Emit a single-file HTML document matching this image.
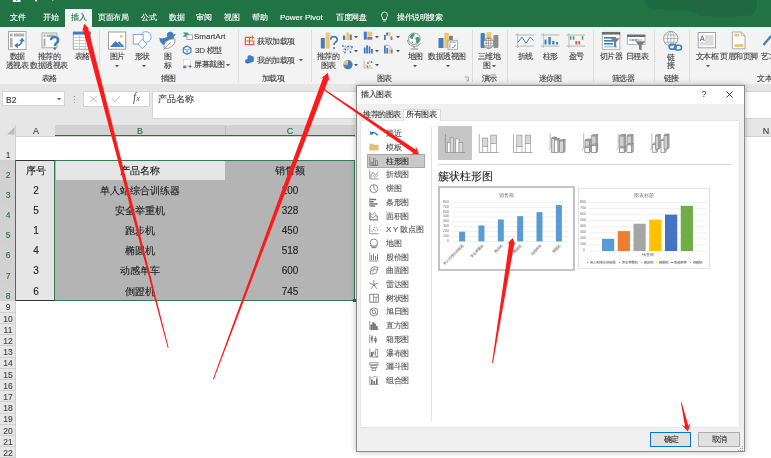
<!DOCTYPE html>
<html><head><meta charset="utf-8">
<style>
*{margin:0;padding:0;box-sizing:border-box}
html,body{width:771px;height:458px;overflow:hidden;background:#fff;font-family:"Liberation Sans",sans-serif;position:relative}
.a{position:absolute}
.t{position:absolute;white-space:nowrap;line-height:1;-webkit-text-stroke:.12px currentColor;will-change:transform}
svg{position:absolute;overflow:visible}
</style></head><body>
<div class="a" style="left:0px;top:0px;width:771px;height:27px;background:#217346;"></div>
<svg style="left:0;top:0" width="771" height="27"><path d="M645 0 H757 Q758 10 751 15.5 Q725 17.5 700 15.5 Q696 9.5 672 9.5 Q650 9.5 647 6Z" fill="#1d6140" opacity=".6"/></svg>
<div class="a" style="left:65px;top:9px;width:26.5px;height:18.5px;background:#f3f3f3;"></div>
<div class="t " style="top:14.00px;font-size:8px;color:#ffffff;letter-spacing:-0.5px;left:10.00px;">文件</div>
<div class="t " style="top:14.00px;font-size:8px;color:#ffffff;letter-spacing:-0.5px;left:42.80px;">开始</div>
<div class="t " style="top:14.00px;font-size:8px;color:#ffffff;letter-spacing:-0.5px;left:97.80px;">页面布局</div>
<div class="t " style="top:14.00px;font-size:8px;color:#ffffff;letter-spacing:-0.5px;left:140.60px;">公式</div>
<div class="t " style="top:14.00px;font-size:8px;color:#ffffff;letter-spacing:-0.5px;left:168.60px;">数据</div>
<div class="t " style="top:14.00px;font-size:8px;color:#ffffff;letter-spacing:-0.5px;left:196.40px;">审阅</div>
<div class="t " style="top:14.00px;font-size:8px;color:#ffffff;letter-spacing:-0.5px;left:224.40px;">视图</div>
<div class="t " style="top:14.00px;font-size:8px;color:#ffffff;letter-spacing:-0.5px;left:252.00px;">帮助</div>
<div class="t " style="top:14.00px;font-size:8px;color:#ffffff;letter-spacing:-0.5px;left:336.00px;">百度网盘</div>
<div class="t " style="top:14.00px;font-size:8px;color:#ffffff;letter-spacing:-0.5px;left:397.00px;">操作说明搜索</div>
<div class="t " style="top:14.00px;font-size:8px;color:#217346;letter-spacing:-0.5px;left:70.70px;">插入</div>
<div class="t " style="top:14.00px;font-size:8px;color:#ffffff;letter-spacing:0px;left:280.40px;">Power Pivot</div>
<div class="a" style="left:0px;top:27px;width:771px;height:57px;background:#f3f3f3;"></div>
<div class="a" style="left:0px;top:83.5px;width:771px;height:1px;background:#d8d8d8;"></div>
<div class="a" style="left:98.5px;top:30px;width:1px;height:52px;background:#dcdcdc;"></div>
<div class="a" style="left:237.7px;top:30px;width:1px;height:52px;background:#dcdcdc;"></div>
<div class="a" style="left:310.5px;top:30px;width:1px;height:52px;background:#dcdcdc;"></div>
<div class="a" style="left:471.8px;top:30px;width:1px;height:52px;background:#dcdcdc;"></div>
<div class="a" style="left:506.8px;top:30px;width:1px;height:52px;background:#dcdcdc;"></div>
<div class="a" style="left:593.2px;top:30px;width:1px;height:52px;background:#dcdcdc;"></div>
<div class="a" style="left:654px;top:30px;width:1px;height:52px;background:#dcdcdc;"></div>
<div class="a" style="left:688.5px;top:30px;width:1px;height:52px;background:#dcdcdc;"></div>
<div class="t " style="top:52.70px;font-size:8px;color:#444;letter-spacing:-0.5px;left:-43.00px;width:120px;text-align:center;">数据</div>
<div class="t " style="top:61.90px;font-size:8px;color:#444;letter-spacing:-0.5px;left:-43.50px;width:120px;text-align:center;">透视表</div>
<div class="t " style="top:52.70px;font-size:8px;color:#444;letter-spacing:-0.5px;left:-11.00px;width:120px;text-align:center;">推荐的</div>
<div class="t " style="top:61.90px;font-size:8px;color:#444;letter-spacing:-0.5px;left:-11.00px;width:120px;text-align:center;">数据透视表</div>
<div class="t " style="top:52.70px;font-size:8px;color:#444;letter-spacing:-0.5px;left:21.60px;width:120px;text-align:center;">表格</div>
<div class="t " style="top:74.90px;font-size:8px;color:#444;letter-spacing:-0.5px;left:-11.00px;width:120px;text-align:center;">表格</div>
<div class="t " style="top:52.70px;font-size:8px;color:#444;letter-spacing:-0.5px;left:57.00px;width:120px;text-align:center;">图片</div>
<div class="t " style="top:52.70px;font-size:8px;color:#444;letter-spacing:-0.5px;left:82.00px;width:120px;text-align:center;">形状</div>
<div class="t " style="top:52.70px;font-size:8px;color:#444;letter-spacing:-0.5px;left:108.00px;width:120px;text-align:center;">图</div>
<div class="t " style="top:61.90px;font-size:8px;color:#444;letter-spacing:-0.5px;left:108.00px;width:120px;text-align:center;">标</div>
<div class="t " style="top:75.10px;font-size:8px;color:#444;letter-spacing:-0.5px;left:108.00px;width:120px;text-align:center;">插图</div>
<div class="t " style="top:32.50px;font-size:8px;color:#444;letter-spacing:0px;left:194.40px;">SmartArt</div>
<div class="t " style="top:46.80px;font-size:8px;color:#444;letter-spacing:-0.3px;left:195.00px;">3D 模型</div>
<div class="t " style="top:61.10px;font-size:8px;color:#444;letter-spacing:-0.5px;left:194.00px;">屏幕截图</div>
<div class="t " style="top:75.10px;font-size:8px;color:#444;letter-spacing:-0.5px;left:213.00px;width:120px;text-align:center;">加载项</div>
<div class="t " style="top:37.50px;font-size:8px;color:#444;letter-spacing:-0.5px;left:256.80px;">获取加载项</div>
<div class="t " style="top:56.50px;font-size:8px;color:#444;letter-spacing:-0.5px;left:257.00px;">我的加载项</div>
<div class="t " style="top:52.70px;font-size:8px;color:#444;letter-spacing:-0.5px;left:268.00px;width:120px;text-align:center;">推荐的</div>
<div class="t " style="top:62.00px;font-size:8px;color:#444;letter-spacing:-0.5px;left:268.00px;width:120px;text-align:center;">图表</div>
<div class="t " style="top:52.70px;font-size:8px;color:#444;letter-spacing:-0.5px;left:355.00px;width:120px;text-align:center;">地图</div>
<div class="t " style="top:52.70px;font-size:8px;color:#444;letter-spacing:-0.5px;left:387.00px;width:120px;text-align:center;">数据透视图</div>
<div class="t " style="top:75.10px;font-size:8px;color:#444;letter-spacing:-0.5px;left:324.00px;width:120px;text-align:center;">图表</div>
<div class="t " style="top:52.70px;font-size:8px;color:#444;letter-spacing:-0.5px;left:429.00px;width:120px;text-align:center;">三维地</div>
<div class="t " style="top:62.00px;font-size:8px;color:#444;letter-spacing:-0.5px;left:427.00px;width:120px;text-align:center;">图</div>
<div class="t " style="top:75.10px;font-size:8px;color:#444;letter-spacing:-0.5px;left:429.00px;width:120px;text-align:center;">演示</div>
<div class="t " style="top:52.70px;font-size:8px;color:#444;letter-spacing:-0.5px;left:464.70px;width:120px;text-align:center;">折线</div>
<div class="t " style="top:52.70px;font-size:8px;color:#444;letter-spacing:-0.5px;left:490.40px;width:120px;text-align:center;">柱形</div>
<div class="t " style="top:52.70px;font-size:8px;color:#444;letter-spacing:-0.5px;left:515.70px;width:120px;text-align:center;">盈亏</div>
<div class="t " style="top:75.10px;font-size:8px;color:#444;letter-spacing:-0.5px;left:489.60px;width:120px;text-align:center;">迷你图</div>
<div class="t " style="top:52.70px;font-size:8px;color:#444;letter-spacing:-0.5px;left:551.00px;width:120px;text-align:center;">切片器</div>
<div class="t " style="top:52.70px;font-size:8px;color:#444;letter-spacing:-0.5px;left:576.50px;width:120px;text-align:center;">日程表</div>
<div class="t " style="top:75.10px;font-size:8px;color:#444;letter-spacing:-0.5px;left:562.70px;width:120px;text-align:center;">筛选器</div>
<div class="t " style="top:53.70px;font-size:8px;color:#444;letter-spacing:-0.5px;left:611.00px;width:120px;text-align:center;">链</div>
<div class="t " style="top:62.30px;font-size:8px;color:#444;letter-spacing:-0.5px;left:611.00px;width:120px;text-align:center;">接</div>
<div class="t " style="top:75.20px;font-size:8px;color:#444;letter-spacing:-0.5px;left:611.00px;width:120px;text-align:center;">链接</div>
<div class="t " style="top:52.90px;font-size:8px;color:#444;letter-spacing:-0.5px;left:646.50px;width:120px;text-align:center;">文本框</div>
<div class="t " style="top:52.90px;font-size:8px;color:#444;letter-spacing:-0.5px;left:678.60px;width:120px;text-align:center;">页眉和页脚</div>
<div class="t " style="top:52.90px;font-size:8px;color:#444;letter-spacing:-0.5px;left:760.70px;">艺术字</div>
<div class="t " style="top:75.20px;font-size:8px;color:#444;letter-spacing:-0.5px;left:756.70px;">文本</div>
<svg style="left:115px;top:65px" width="4" height="3"><path d="M0 0H4L2 2.2Z" fill="#555"/></svg>
<svg style="left:141.5px;top:65px" width="4" height="3"><path d="M0 0H4L2 2.2Z" fill="#555"/></svg>
<svg style="left:226px;top:63.8px" width="4" height="3"><path d="M0 0H4L2 2.2Z" fill="#555"/></svg>
<svg style="left:298.6px;top:59px" width="4" height="3"><path d="M0 0H4L2 2.2Z" fill="#555"/></svg>
<svg style="left:354px;top:36px" width="4" height="3"><path d="M0 0H4L2 2.2Z" fill="#555"/></svg>
<svg style="left:354px;top:49.5px" width="4" height="3"><path d="M0 0H4L2 2.2Z" fill="#555"/></svg>
<svg style="left:354px;top:63.8px" width="4" height="3"><path d="M0 0H4L2 2.2Z" fill="#555"/></svg>
<svg style="left:375px;top:36px" width="4" height="3"><path d="M0 0H4L2 2.2Z" fill="#555"/></svg>
<svg style="left:375px;top:49.5px" width="4" height="3"><path d="M0 0H4L2 2.2Z" fill="#555"/></svg>
<svg style="left:375px;top:63.8px" width="4" height="3"><path d="M0 0H4L2 2.2Z" fill="#555"/></svg>
<svg style="left:395.5px;top:36px" width="4" height="3"><path d="M0 0H4L2 2.2Z" fill="#555"/></svg>
<svg style="left:395.5px;top:49.5px" width="4" height="3"><path d="M0 0H4L2 2.2Z" fill="#555"/></svg>
<svg style="left:413px;top:64.7px" width="4" height="3"><path d="M0 0H4L2 2.2Z" fill="#555"/></svg>
<svg style="left:446.3px;top:64.7px" width="4" height="3"><path d="M0 0H4L2 2.2Z" fill="#555"/></svg>
<svg style="left:492px;top:64.7px" width="4" height="3"><path d="M0 0H4L2 2.2Z" fill="#555"/></svg>
<svg style="left:705.8px;top:65px" width="4" height="3"><path d="M0 0H4L2 2.2Z" fill="#555"/></svg>
<svg style="left:0;top:0" width="771" height="90"><rect x="8.5" y="31.5" width="17.5" height="18" fill="#fff" stroke="#a6a6a6" stroke-width="1"/><rect x="10" y="33.5" width="2.6" height="3" fill="#b0b0b0"/><rect x="14" y="33.5" width="10.2" height="3" fill="#b0b0b0"/><rect x="10" y="38" width="2.6" height="9.5" fill="#b0b0b0"/><path d="M16.5 45.5 Q21.5 45.5 22 40.5" fill="none" stroke="#3f7fc0" stroke-width="1.8"/><path d="M14.2 45.6 L17.8 42.8 L18 48.4Z M22.2 37.6 L19.2 41.2 L24.8 41.4Z" fill="#3f7fc0"/><rect x="42" y="33" width="14.8" height="14.8" fill="#fff" stroke="#a6a6a6" stroke-width="1"/><rect x="43.5" y="34.5" width="2" height="2.5" fill="#b0b0b0"/><rect x="46.5" y="34.5" width="9" height="2.5" fill="#b0b0b0"/><rect x="43.5" y="38.5" width="2" height="8" fill="#b0b0b0"/><path d="M50.9 40.3 Q50.9 37.2 54.6 37.2 Q58.3 37.2 58.3 40.2 Q58.3 42.2 56.3 43.1 Q54.8 43.8 54.8 46" fill="none" stroke="#3f7fc0" stroke-width="2.3"/><circle cx="54.8" cy="48.5" r="1.3" fill="#3f7fc0"/><rect x="73.3" y="32" width="17.2" height="17.2" fill="#fff" stroke="#a8a8a8" stroke-width="1"/><rect x="73" y="31.8" width="17.8" height="2.8" fill="#3f7fc0"/><line x1="73.5" x2="90.5" y1="37.5" y2="37.5" stroke="#c4c4c4" stroke-width=".8"/><line x1="73.5" x2="90.5" y1="40.5" y2="40.5" stroke="#c4c4c4" stroke-width=".8"/><line x1="73.5" x2="90.5" y1="43.5" y2="43.5" stroke="#c4c4c4" stroke-width=".8"/><line x1="73.5" x2="90.5" y1="46.5" y2="46.5" stroke="#c4c4c4" stroke-width=".8"/><line x1="79.5" x2="79.5" y1="34.5" y2="49" stroke="#c4c4c4" stroke-width=".8"/><line x1="85.5" x2="85.5" y1="34.5" y2="49" stroke="#c4c4c4" stroke-width=".8"/><rect x="108.5" y="32" width="17.2" height="17.2" fill="#fff" stroke="#9c9c9c" stroke-width="1"/><circle cx="121.3" cy="36.3" r="1.5" fill="#f0c36d"/><path d="M110 47 L115.5 41 L120 45.3 L121 47Z" fill="#3f7fc0"/><path d="M117.8 42.5 L119.3 41.2 L124.4 47 L121.6 47Z" fill="#3f7fc0"/><circle cx="145.8" cy="37" r="5.3" fill="#fff" stroke="#6fa0d8" stroke-width=".9"/><rect x="133.2" y="34.5" width="10" height="9.5" fill="#fff" stroke="#6fa0d8" stroke-width=".9"/><path d="M142.3 39.3 L146.9 43.9 L142.3 48.5 L137.7 43.9Z" fill="#fff" stroke="#6fa0d8" stroke-width=".9"/><path d="M159.3 37.5 Q161 39 164 38 L167.5 37 Q166.5 35.5 167 33.5 Q168.3 31.3 171 31.8 Q173.3 32.3 173.5 34.3 L176.3 34.6 L173.8 36.2 Q174.5 38.5 172.8 40.5 Q168 44 163.5 45 Q159.5 43 159.3 37.5Z" fill="#3f7fc0"/><path d="M164.2 48.8 Q163.5 43 167 40.8 Q170.8 38.5 175 38.8 Q175.5 43.5 172.5 46 Q169 48.8 164.2 48.8Z" fill="#fff" stroke="#8a8a8a" stroke-width=".8"/><path d="M163.5 49.6 L171 42" stroke="#8a8a8a" stroke-width=".8"/><path d="M182.7 32.4 H187.5 L189.5 34.5 L187.5 36.7 H182.7 L184.7 34.5Z" fill="#3aa57a"/><rect x="187" y="34.8" width="5.5" height="4.8" fill="#fff" stroke="#9a9a9a" stroke-width=".8"/><path d="M187.1 46 L190.9 48.1 V52.3 L187.1 54.4 L183.3 52.3 V48.1Z" fill="none" stroke="#3f7fc0" stroke-width="1.2"/><path d="M183.8 48.5 L187.1 50.3 L190.4 48.5 M187.1 50.3 V53.8" fill="none" stroke="#3f7fc0" stroke-width=".8"/><rect x="183.5" y="59.5" width="7" height="6" fill="#fff" stroke="#d0d0d0" stroke-width=".6"/><path d="M183.2 68.3 V66.3 Q184.8 64.8 186.4 66.3 V68.3Z" fill="#7b7b7b"/><path d="M188.6 66.6 H191.6 M190.1 65.1 V68.1" stroke="#3f7fc0" stroke-width="1"/><path d="M245.3 37.3 H251.5 M245.3 37.3 V44.6 H253.8 V40.5 M249.5 37.3 V44.6 M245.3 41 H253.8" fill="none" stroke="#e3643a" stroke-width="1.2"/><path d="M252.3 35.5 V39.5 M250.3 37.5 H254.3" stroke="#e3643a" stroke-width="1.1"/><path d="M249 55 L253.8 56.8 V61.5 L249 63.3 L247.5 62 L247.5 56.5Z" fill="#3f7fc0"/><circle cx="247.5" cy="61.3" r="2.4" fill="#3f7fc0"/><rect x="320.8" y="38" width="4" height="10.5" fill="#3f7fc0"/><rect x="325.7" y="32.7" width="4" height="15.8" fill="#f0c36d"/><rect x="330.2" y="35.3" width="3.5" height="2" fill="#9a9a9a"/><path d="M330.6 39.8 Q330.6 36.6 333.8 36.6 Q337.2 36.6 337.2 39.4 Q337.2 41.3 335.4 42.2 Q334 43 334 45" fill="none" stroke="#fff" stroke-width="3"/><path d="M330.6 39.8 Q330.6 36.6 333.8 36.6 Q337.2 36.6 337.2 39.4 Q337.2 41.3 335.4 42.2 Q334 43 334 45" fill="none" stroke="#3f7fc0" stroke-width="1.8"/><circle cx="334" cy="48" r="1.1" fill="#3f7fc0"/><rect x="343" y="35.5" width="2.2" height="4.5" fill="#3f7fc0"/><rect x="346.3" y="32.5" width="2.5" height="7.5" fill="#f0c36d"/><rect x="349.6" y="34.5" width="2.2" height="5.5" fill="#7d7d7d"/><rect x="363.8" y="31.7" width="3" height="8" fill="#3f7fc0"/><rect x="367.3" y="31.7" width="5" height="4.5" fill="#f0c36d"/><rect x="367.3" y="36.8" width="5" height="2.9" fill="#7d7d7d"/><rect x="384" y="35" width="1.8" height="5" fill="#3f7fc0"/><rect x="386.2" y="32.5" width="2" height="3" fill="#3f7fc0"/><rect x="388.5" y="32" width="1.8" height="4.5" fill="#f0c36d"/><rect x="390.6" y="36.5" width="1.8" height="3.5" fill="#7d7d7d"/><path d="M343 52 L345.5 45.5 L348 50.5 L350.5 45 L352 50" fill="none" stroke="#3f7fc0" stroke-width=".7" stroke-dasharray="1 .8"/><circle cx="343" cy="46" r=".9" fill="#3f7fc0"/><circle cx="345.5" cy="49.5" r=".9" fill="#3f7fc0"/><circle cx="348" cy="46.5" r=".9" fill="#3f7fc0"/><circle cx="350.5" cy="52" r=".9" fill="#3f7fc0"/><circle cx="352" cy="47" r=".9" fill="#3f7fc0"/><circle cx="345" cy="52.5" r=".9" fill="#3f7fc0"/><rect x="363.8" y="47.5" width="1.8" height="6" fill="#3f7fc0"/><rect x="366.2" y="45.3" width="1.8" height="8.2" fill="#3f7fc0"/><rect x="368.6" y="46.5" width="1.8" height="7" fill="#3f7fc0"/><rect x="371" y="49" width="1.8" height="4.5" fill="#3f7fc0"/><rect x="384" y="46" width="1.8" height="7.5" fill="#3f7fc0"/><rect x="386.3" y="48" width="1.8" height="5.5" fill="#3f7fc0"/><rect x="388.6" y="48.5" width="1.8" height="5" fill="#f0c36d"/><rect x="390.8" y="49.5" width="1.8" height="4" fill="#7d7d7d"/><path d="M384 45.5 L388 45 L392.5 49" fill="none" stroke="#7d7d7d" stroke-width=".6"/><circle cx="348" cy="64.7" r="4.6" fill="#3f7fc0"/><path d="M348 64.7 V60.1 A4.6 4.6 0 0 0 343.4 64.7Z" fill="#f0c36d"/><path d="M348 64.7 L343.6 66.2 A4.6 4.6 0 0 0 345 68.3Z" fill="#8a8a8a"/><path d="M364 60.7 V68 H372.8" fill="none" stroke="#a0a0a0" stroke-width=".7"/><circle cx="366" cy="65.5" r=".9" fill="#f0c36d"/><circle cx="368" cy="63" r=".9" fill="#3f7fc0"/><circle cx="370" cy="66" r=".9" fill="#f0c36d"/><circle cx="371.5" cy="62" r=".9" fill="#3f7fc0"/><circle cx="367.5" cy="66.5" r=".9" fill="#3f7fc0"/><circle cx="369.5" cy="61.5" r=".9" fill="#f0c36d"/><circle cx="414.3" cy="38.8" r="5.8" fill="#fff" stroke="#8a8a8a" stroke-width=".9"/><path d="M409.6 37.5 Q410.5 33.8 414 33.2 Q415.5 34.5 414.2 36 Q412.5 36.5 413.2 38.5 Q411.5 39.8 409.6 37.5Z M415.5 37.5 Q418 36.5 419.6 38 Q420 41.5 417 43.8 Q415.2 42.5 416.3 40.8 Q415 39.5 415.5 37.5Z M411.5 41.5 Q413 41 413.5 43.5 Q412 43.8 411.5 41.5Z" fill="#3c9d6f"/><path d="M407.5 40 A7 7 0 0 0 420.5 43" fill="none" stroke="#8a8a8a" stroke-width=".9"/><path d="M414 45.8 V48.5 M410.5 49 H418" stroke="#8a8a8a" stroke-width="1"/><rect x="438.5" y="38" width="5" height="10" fill="#3f7fc0"/><rect x="444.3" y="33" width="4.5" height="15" fill="#f0c36d"/><rect x="449" y="35.8" width="3.8" height="4.2" fill="#7d7d7d"/><rect x="448" y="40.3" width="9.5" height="9" fill="#fff" stroke="#9a9a9a" stroke-width=".8"/><rect x="449.2" y="41.5" width="7.2" height="1.3" fill="#b0b0b0"/><rect x="449.2" y="43.5" width="1.3" height="5" fill="#b0b0b0"/><path d="M452 48 Q455 47.5 455.5 44.5" fill="none" stroke="#3f7fc0" stroke-width=".9"/><rect x="480.6" y="33" width="4.3" height="15" fill="#3f7fc0" rx="1"/><rect x="486.3" y="32.3" width="5" height="15.7" fill="#f0c36d" rx="1"/><rect x="493.4" y="35" width="5" height="13" fill="#8d8d8d" rx="1"/><circle cx="488.6" cy="43.2" r="5.2" fill="#fff" fill-opacity=".85" stroke="#6d6d6d" stroke-width=".7"/><path d="M483.4 43.2 H493.8 M488.6 38 V48.4 M484.3 40.5 H492.9 M484.3 45.9 H492.9" fill="none" stroke="#6d6d6d" stroke-width=".5"/><ellipse cx="488.6" cy="43.2" rx="2.4" ry="5.2" fill="none" stroke="#6d6d6d" stroke-width=".5"/><path d="M515.3 35 H533.8 M515.3 46.1 H533.8" stroke="#b4b4b4" stroke-width="1"/><path d="M517.5999999999999 33 V48" stroke="#b4b4b4" stroke-width=".8"/><path d="M541 35 H559.5 M541 46.1 H559.5" stroke="#b4b4b4" stroke-width="1"/><path d="M543.3 33 V48" stroke="#b4b4b4" stroke-width=".8"/><path d="M566.6 35 H585.1 M566.6 46.1 H585.1" stroke="#b4b4b4" stroke-width="1"/><path d="M568.9 33 V48" stroke="#b4b4b4" stroke-width=".8"/><path d="M517.6 42.5 L522 37.2 L526 43.3 L530 37.2 L533.5 40.5" fill="none" stroke="#3f7fc0" stroke-width="1"/><rect x="544.5" y="39.5" width="2" height="5" fill="#3f7fc0"/><rect x="548.4" y="37" width="2.4" height="7.5" fill="#3f7fc0"/><rect x="552.2" y="41" width="2.2" height="3.5" fill="#3f7fc0"/><rect x="556" y="42" width="2" height="2.5" fill="#3f7fc0"/><rect x="569.8" y="36.2" width="1.6" height="3.5" fill="#46a070"/><rect x="572.8" y="36.2" width="1.6" height="3.5" fill="#46a070"/><rect x="581.8" y="36.2" width="1.6" height="3.5" fill="#46a070"/><rect x="575.4" y="41" width="1.7" height="3.5" fill="#e05a30"/><rect x="578.4" y="41" width="1.7" height="3.5" fill="#e05a30"/><rect x="602.3" y="32.3" width="17.6" height="17" fill="#fff" stroke="#a0a0a0" stroke-width=".8"/><rect x="602" y="32" width="18.2" height="2.6" fill="#6f6f6f"/><rect x="604" y="37" width="12" height="1.6" fill="#3f7fc0"/><rect x="604" y="40" width="9" height="1.6" fill="#3f7fc0"/><rect x="604" y="43" width="9" height="1.6" fill="#3f7fc0"/><rect x="604" y="46" width="13" height="1.4" fill="#a9c4e4"/><path d="M610.5 38.3 H619.6 L616.2 42.2 V47.5 L613.9 46.3 V42.2Z" fill="#7d7d7d"/><rect x="627.3" y="35" width="17.7" height="9.3" fill="#fff" stroke="#a0a0a0" stroke-width=".8"/><rect x="627" y="34.7" width="18.3" height="2.3" fill="#6f6f6f"/><rect x="629" y="39.3" width="2" height="1.4" fill="#9ab"/><rect x="631.5" y="39.3" width="2.5" height="1.4" fill="#3f7fc0"/><rect x="634.5" y="39.3" width="3" height="1.4" fill="#3f7fc0"/><rect x="638" y="39.3" width="4" height="1.4" fill="#bbb"/><path d="M635.2 41.3 H645.3 L641.6 45.5 V50.4 L639 49.2 V45.5Z" fill="#7d7d7d"/><circle cx="670.8" cy="38.6" r="7.2" fill="#fff" stroke="#8a8a8a" stroke-width=".8"/><path d="M663.6 38.6 H678 M664.6 35 H677 M664.6 42.2 H677 M670.8 31.4 V45.8" fill="none" stroke="#8a8a8a" stroke-width=".6"/><ellipse cx="670.8" cy="38.6" rx="3.3" ry="7.2" fill="none" stroke="#8a8a8a" stroke-width=".6"/><rect x="669.2" y="44.3" width="7" height="4.8" rx="2.4" fill="none" stroke="#3f7fc0" stroke-width="1.6"/><rect x="674.5" y="45.2" width="7" height="4.8" rx="2.4" fill="none" stroke="#3f7fc0" stroke-width="1.6"/><rect x="698.2" y="32.5" width="17.3" height="15.3" fill="#fff" stroke="#a0a0a0" stroke-width="1"/><rect x="705" y="35" width="8.5" height="10.5" fill="#dcdcdc"/><rect x="700" y="42" width="5" height="3.5" fill="#dcdcdc"/><path d="M700.3 41 L702.3 35.8 L704.3 41 M701 39.3 H703.6" fill="none" stroke="#3f7fc0" stroke-width="1"/><path d="M732.3 32 H741.3 L745 35.7 V48.8 H732.3Z" fill="#fff" stroke="#a0a0a0" stroke-width=".9"/><path d="M741.3 32 V35.7 H745" fill="none" stroke="#a0a0a0" stroke-width=".8"/><rect x="734.5" y="33.7" width="4.5" height="2.8" fill="#f0c36d"/><rect x="734.5" y="44.2" width="8.8" height="2.8" fill="#f0c36d"/><path d="M763.5 45 L771 36" stroke="#3f7fc0" stroke-width="2.2"/><rect x="12.8" y="0" width="7.8" height="1.9" fill="#fff"/><rect x="16.2" y="0" width="1" height="1" fill="#217346"/><path d="M34.8 0 L36 2 L37.4 0Z" fill="#fff"/><circle cx="52.8" cy="0.2" r=".6" fill="#cfe"/><path d="M381.5 15 Q381.5 12 384.5 12 Q387.5 12 387.5 15 Q387.5 16.8 386.3 17.8 V19.5 H382.7 V17.8 Q381.5 16.8 381.5 15Z" fill="none" stroke="#fff" stroke-width=".8"/><path d="M383 21 H386" stroke="#fff" stroke-width=".8"/><path d="M464.5 77 H468.5 V81 M466 78.5 L468.3 80.8 M466.5 81 H468.5" fill="none" stroke="#888" stroke-width=".6"/></svg>
<div class="a" style="left:0px;top:84px;width:771px;height:41px;background:#e6e6e6;"></div>
<div class="a" style="left:2px;top:90.5px;width:62.5px;height:15.5px;background:#fff;border:1px solid #d5d5d5"></div>
<div class="t " style="top:95.70px;font-size:8.5px;color:#333;letter-spacing:0px;left:5.50px;">B2</div>
<svg style="left:57px;top:98px" width="4" height="3"><path d="M0 0H4L2 2.2Z" fill="#555"/></svg>
<div class="a" style="left:82.5px;top:90.5px;width:67px;height:16px;background:#fff;border:1px solid #d5d5d5"></div>
<div class="a" style="left:151.5px;top:90.5px;width:630px;height:28px;background:#fff;border:1px solid #d5d5d5"></div>
<div class="t " style="top:94.90px;font-size:9px;color:#444;letter-spacing:0px;left:157.70px;">产品名称</div>
<svg style="left:0;top:0" width="771" height="120"><path d="M90.3 96.2 L96.7 101.8 M96.7 96.2 L90.3 101.8" stroke="#a8a8a8" stroke-width=".9"/><path d="M112.4 99 L115 101.7 L119.8 96.2" fill="none" stroke="#a8a8a8" stroke-width=".9"/></svg>
<div class="t" style="left:133.2px;top:92px;font-family:Liberation Serif,serif;font-style:italic;font-size:11.5px;color:#555;-webkit-text-stroke:0">f<span style="font-size:8.5px">x</span></div>
<div class="a" style="left:73.5px;top:95.5px;width:1px;height:1px;background:#999;"></div>
<div class="a" style="left:73.5px;top:98.5px;width:1px;height:1px;background:#999;"></div>
<div class="a" style="left:73.5px;top:101.5px;width:1px;height:1px;background:#999;"></div>
<div class="a" style="left:0px;top:125px;width:771px;height:11px;background:#e6e6e6;"></div>
<div class="a" style="left:0px;top:135.5px;width:771px;height:1px;background:#d0d0d0;"></div>
<div class="a" style="left:55px;top:125px;width:300px;height:10px;background:#d2d2d2;"></div>
<div class="a" style="left:55px;top:134.7px;width:300px;height:1.5px;background:#217346;"></div>
<div class="a" style="left:225px;top:126px;width:1px;height:9px;background:#bdbdbd;"></div>
<div class="a" style="left:0px;top:136px;width:15.5px;height:322px;background:#e6e6e6;"></div>
<div class="a" style="left:15px;top:125px;width:1px;height:333px;background:#cfcfcf;"></div>
<div class="a" style="left:0px;top:160px;width:15px;height:141px;background:#d2d2d2;"></div>
<div class="t " style="top:127.00px;font-size:9px;color:#444;letter-spacing:0px;left:-24.50px;width:120px;text-align:center;">A</div>
<div class="t " style="top:127.00px;font-size:9px;color:#217346;letter-spacing:0px;left:80.00px;width:120px;text-align:center;">B</div>
<div class="t " style="top:127.00px;font-size:9px;color:#217346;letter-spacing:0px;left:230.00px;width:120px;text-align:center;">C</div>
<div class="t " style="top:127.00px;font-size:9px;color:#444;letter-spacing:0px;left:705.60px;width:120px;text-align:center;">N</div>
<svg style="left:7px;top:127px" width="8" height="8"><path d="M7.5 0V7.5H0Z" fill="#bcbcbc"/></svg>
<div class="a" style="left:0px;top:159.5px;width:15px;height:1px;background:#d0d0d0;"></div>
<div class="a" style="left:0px;top:179.6px;width:15px;height:1px;background:#d0d0d0;"></div>
<div class="a" style="left:0px;top:199.7px;width:15px;height:1px;background:#d0d0d0;"></div>
<div class="a" style="left:0px;top:219.8px;width:15px;height:1px;background:#d0d0d0;"></div>
<div class="a" style="left:0px;top:239.9px;width:15px;height:1px;background:#d0d0d0;"></div>
<div class="a" style="left:0px;top:260.0px;width:15px;height:1px;background:#d0d0d0;"></div>
<div class="a" style="left:0px;top:280.1px;width:15px;height:1px;background:#d0d0d0;"></div>
<div class="a" style="left:0px;top:300.20000000000005px;width:15px;height:1px;background:#d0d0d0;"></div>
<div class="a" style="left:0px;top:311.7px;width:15px;height:1px;background:#d0d0d0;"></div>
<div class="a" style="left:0px;top:322.9px;width:15px;height:1px;background:#d0d0d0;"></div>
<div class="a" style="left:0px;top:334.1px;width:15px;height:1px;background:#d0d0d0;"></div>
<div class="a" style="left:0px;top:345.3px;width:15px;height:1px;background:#d0d0d0;"></div>
<div class="a" style="left:0px;top:356.5px;width:15px;height:1px;background:#d0d0d0;"></div>
<div class="a" style="left:0px;top:367.7px;width:15px;height:1px;background:#d0d0d0;"></div>
<div class="a" style="left:0px;top:378.9px;width:15px;height:1px;background:#d0d0d0;"></div>
<div class="a" style="left:0px;top:390.1px;width:15px;height:1px;background:#d0d0d0;"></div>
<div class="a" style="left:0px;top:401.3px;width:15px;height:1px;background:#d0d0d0;"></div>
<div class="a" style="left:0px;top:412.5px;width:15px;height:1px;background:#d0d0d0;"></div>
<div class="a" style="left:0px;top:423.7px;width:15px;height:1px;background:#d0d0d0;"></div>
<div class="a" style="left:0px;top:434.9px;width:15px;height:1px;background:#d0d0d0;"></div>
<div class="a" style="left:0px;top:446.1px;width:15px;height:1px;background:#d0d0d0;"></div>
<div class="a" style="left:0px;top:457.29999999999995px;width:15px;height:1px;background:#d0d0d0;"></div>
<div class="t " style="top:151.40px;font-size:8.5px;color:#444;letter-spacing:0px;left:-52.50px;width:120px;text-align:center;">1</div>
<div class="t " style="top:171.00px;font-size:8.5px;color:#217346;letter-spacing:0px;left:-52.50px;width:120px;text-align:center;">2</div>
<div class="t " style="top:191.10px;font-size:8.5px;color:#217346;letter-spacing:0px;left:-52.50px;width:120px;text-align:center;">3</div>
<div class="t " style="top:211.20px;font-size:8.5px;color:#217346;letter-spacing:0px;left:-52.50px;width:120px;text-align:center;">4</div>
<div class="t " style="top:231.30px;font-size:8.5px;color:#217346;letter-spacing:0px;left:-52.50px;width:120px;text-align:center;">5</div>
<div class="t " style="top:251.40px;font-size:8.5px;color:#217346;letter-spacing:0px;left:-52.50px;width:120px;text-align:center;">6</div>
<div class="t " style="top:271.50px;font-size:8.5px;color:#217346;letter-spacing:0px;left:-52.50px;width:120px;text-align:center;">7</div>
<div class="t " style="top:291.60px;font-size:8.5px;color:#217346;letter-spacing:0px;left:-52.50px;width:120px;text-align:center;">8</div>
<div class="t " style="top:303.40px;font-size:8.5px;color:#444;letter-spacing:0px;left:-52.50px;width:120px;text-align:center;">9</div>
<div class="t " style="top:314.60px;font-size:8.5px;color:#444;letter-spacing:0px;left:-52.50px;width:120px;text-align:center;">10</div>
<div class="t " style="top:325.80px;font-size:8.5px;color:#444;letter-spacing:0px;left:-52.50px;width:120px;text-align:center;">11</div>
<div class="t " style="top:337.00px;font-size:8.5px;color:#444;letter-spacing:0px;left:-52.50px;width:120px;text-align:center;">12</div>
<div class="t " style="top:348.20px;font-size:8.5px;color:#444;letter-spacing:0px;left:-52.50px;width:120px;text-align:center;">13</div>
<div class="t " style="top:359.40px;font-size:8.5px;color:#444;letter-spacing:0px;left:-52.50px;width:120px;text-align:center;">14</div>
<div class="t " style="top:370.60px;font-size:8.5px;color:#444;letter-spacing:0px;left:-52.50px;width:120px;text-align:center;">15</div>
<div class="t " style="top:381.80px;font-size:8.5px;color:#444;letter-spacing:0px;left:-52.50px;width:120px;text-align:center;">16</div>
<div class="t " style="top:393.00px;font-size:8.5px;color:#444;letter-spacing:0px;left:-52.50px;width:120px;text-align:center;">17</div>
<div class="t " style="top:404.20px;font-size:8.5px;color:#444;letter-spacing:0px;left:-52.50px;width:120px;text-align:center;">18</div>
<div class="t " style="top:415.40px;font-size:8.5px;color:#444;letter-spacing:0px;left:-52.50px;width:120px;text-align:center;">19</div>
<div class="t " style="top:426.60px;font-size:8.5px;color:#444;letter-spacing:0px;left:-52.50px;width:120px;text-align:center;">20</div>
<div class="t " style="top:437.80px;font-size:8.5px;color:#444;letter-spacing:0px;left:-52.50px;width:120px;text-align:center;">21</div>
<div class="t " style="top:449.00px;font-size:8.5px;color:#444;letter-spacing:0px;left:-52.50px;width:120px;text-align:center;">22</div>
<div class="a" style="left:16px;top:160px;width:39px;height:141px;background:#e6e6e6;"></div>
<div class="a" style="left:55px;top:160px;width:299.5px;height:141px;background:#b4b4b4;"></div>
<div class="a" style="left:56px;top:161px;width:169px;height:19px;background:#e6e6e6;"></div>
<div class="a" style="left:15px;top:160px;width:340px;height:141px;background:transparent;border:1px solid #2d7f52"></div>
<div class="a" style="left:54px;top:160px;width:1px;height:141px;background:#2d7f52;"></div>
<div class="a" style="left:16px;top:159.5px;width:39px;height:1.5px;background:#333;"></div>
<div class="a" style="left:16px;top:299.5px;width:39px;height:1.5px;background:#333;"></div>
<div class="a" style="left:352.8px;top:299.2px;width:3.2px;height:3.2px;background:#1d6a3e;"></div>
<div class="t " style="top:165.90px;font-size:10px;color:#222;letter-spacing:0px;left:-24.50px;width:120px;text-align:center;">序号</div>
<div class="t " style="top:165.90px;font-size:10px;color:#222;letter-spacing:0px;left:80.00px;width:120px;text-align:center;">产品名称</div>
<div class="t " style="top:165.90px;font-size:10px;color:#222;letter-spacing:0px;left:229.80px;width:120px;text-align:center;">销售额</div>
<div class="t " style="top:186.00px;font-size:10px;color:#222;letter-spacing:0px;left:-24.50px;width:120px;text-align:center;">2</div>
<div class="t " style="top:186.00px;font-size:10px;color:#222;letter-spacing:0px;left:80.00px;width:120px;text-align:center;">单人站综合训练器</div>
<div class="t " style="top:186.00px;font-size:10px;color:#222;letter-spacing:0px;left:229.80px;width:120px;text-align:center;">200</div>
<div class="t " style="top:206.10px;font-size:10px;color:#222;letter-spacing:0px;left:-24.50px;width:120px;text-align:center;">5</div>
<div class="t " style="top:206.10px;font-size:10px;color:#222;letter-spacing:0px;left:80.00px;width:120px;text-align:center;">安全举重机</div>
<div class="t " style="top:206.10px;font-size:10px;color:#222;letter-spacing:0px;left:229.80px;width:120px;text-align:center;">328</div>
<div class="t " style="top:226.20px;font-size:10px;color:#222;letter-spacing:0px;left:-24.50px;width:120px;text-align:center;">1</div>
<div class="t " style="top:226.20px;font-size:10px;color:#222;letter-spacing:0px;left:80.00px;width:120px;text-align:center;">跑步机</div>
<div class="t " style="top:226.20px;font-size:10px;color:#222;letter-spacing:0px;left:229.80px;width:120px;text-align:center;">450</div>
<div class="t " style="top:246.30px;font-size:10px;color:#222;letter-spacing:0px;left:-24.50px;width:120px;text-align:center;">4</div>
<div class="t " style="top:246.30px;font-size:10px;color:#222;letter-spacing:0px;left:80.00px;width:120px;text-align:center;">椭圆机</div>
<div class="t " style="top:246.30px;font-size:10px;color:#222;letter-spacing:0px;left:229.80px;width:120px;text-align:center;">518</div>
<div class="t " style="top:266.40px;font-size:10px;color:#222;letter-spacing:0px;left:-24.50px;width:120px;text-align:center;">3</div>
<div class="t " style="top:266.40px;font-size:10px;color:#222;letter-spacing:0px;left:80.00px;width:120px;text-align:center;">动感单车</div>
<div class="t " style="top:266.40px;font-size:10px;color:#222;letter-spacing:0px;left:229.80px;width:120px;text-align:center;">600</div>
<div class="t " style="top:286.50px;font-size:10px;color:#222;letter-spacing:0px;left:-24.50px;width:120px;text-align:center;">6</div>
<div class="t " style="top:286.50px;font-size:10px;color:#222;letter-spacing:0px;left:80.00px;width:120px;text-align:center;">倒蹬机</div>
<div class="t " style="top:286.50px;font-size:10px;color:#222;letter-spacing:0px;left:229.80px;width:120px;text-align:center;">745</div>
<div class="a" style="left:355.5px;top:84.5px;width:389px;height:367.5px;background:#f0f0f0;border:1px solid #8c8c8c;box-shadow:0 0 6px rgba(0,0,0,.28)"></div>
<div class="a" style="left:356.5px;top:85.5px;width:387px;height:18px;background:#fff;"></div>
<div class="t " style="top:91.00px;font-size:8px;color:#333;letter-spacing:-0.5px;left:360.60px;">插入图表</div>
<div class="t " style="top:90.00px;font-size:9px;color:#333;letter-spacing:0px;left:643.50px;width:120px;text-align:center;-webkit-text-stroke:0;">?</div>
<svg style="left:726px;top:91px" width="7" height="7"><path d="M0.5 0.5L6.5 6.5M6.5 0.5L0.5 6.5" stroke="#333" stroke-width="0.9"/></svg>
<div class="a" style="left:359.5px;top:119.5px;width:380px;height:308.5px;background:#fff;border:1px solid #e6e6e6"></div>
<div class="a" style="left:403px;top:108.5px;width:37.5px;height:12px;background:#fff;border:1px solid #dadada;border-bottom:none"></div>
<div class="t " style="top:110.90px;font-size:8px;color:#444;letter-spacing:-0.5px;left:363.00px;">推荐的图表</div>
<div class="t " style="top:110.70px;font-size:8px;color:#333;letter-spacing:-0.5px;left:406.40px;">所有图表</div>
<div class="a" style="left:367px;top:154.2px;width:57.5px;height:13.5px;background:#c8c8c8;border:1px solid #a8a8a8"></div>
<div class="t " style="top:130.30px;font-size:8px;color:#555;letter-spacing:-0.5px;left:386.00px;-webkit-text-stroke:.1px #555;">最近</div>
<div class="t " style="top:144.00px;font-size:8px;color:#555;letter-spacing:-0.5px;left:386.00px;-webkit-text-stroke:.1px #555;">模板</div>
<div class="t " style="top:157.70px;font-size:8px;color:#333;letter-spacing:-0.5px;left:386.00px;">柱形图</div>
<div class="t " style="top:171.40px;font-size:8px;color:#555;letter-spacing:-0.5px;left:386.00px;-webkit-text-stroke:.1px #555;">折线图</div>
<div class="t " style="top:185.10px;font-size:8px;color:#555;letter-spacing:-0.5px;left:386.00px;-webkit-text-stroke:.1px #555;">饼图</div>
<div class="t " style="top:198.80px;font-size:8px;color:#555;letter-spacing:-0.5px;left:386.00px;-webkit-text-stroke:.1px #555;">条形图</div>
<div class="t " style="top:212.50px;font-size:8px;color:#555;letter-spacing:-0.5px;left:386.00px;-webkit-text-stroke:.1px #555;">面积图</div>
<div class="t " style="top:226.20px;font-size:8px;color:#555;letter-spacing:-0.2px;left:386.00px;-webkit-text-stroke:.1px #555;">X Y 散点图</div>
<div class="t " style="top:239.90px;font-size:8px;color:#555;letter-spacing:-0.5px;left:386.00px;-webkit-text-stroke:.1px #555;">地图</div>
<div class="t " style="top:253.60px;font-size:8px;color:#555;letter-spacing:-0.5px;left:386.00px;-webkit-text-stroke:.1px #555;">股价图</div>
<div class="t " style="top:267.30px;font-size:8px;color:#555;letter-spacing:-0.5px;left:386.00px;-webkit-text-stroke:.1px #555;">曲面图</div>
<div class="t " style="top:281.00px;font-size:8px;color:#555;letter-spacing:-0.5px;left:386.00px;-webkit-text-stroke:.1px #555;">雷达图</div>
<div class="t " style="top:294.70px;font-size:8px;color:#555;letter-spacing:-0.5px;left:386.00px;-webkit-text-stroke:.1px #555;">树状图</div>
<div class="t " style="top:308.40px;font-size:8px;color:#555;letter-spacing:-0.5px;left:386.00px;-webkit-text-stroke:.1px #555;">旭日图</div>
<div class="t " style="top:322.10px;font-size:8px;color:#555;letter-spacing:-0.5px;left:386.00px;-webkit-text-stroke:.1px #555;">直方图</div>
<div class="t " style="top:335.80px;font-size:8px;color:#555;letter-spacing:-0.5px;left:386.00px;-webkit-text-stroke:.1px #555;">箱形图</div>
<div class="t " style="top:349.50px;font-size:8px;color:#555;letter-spacing:-0.5px;left:386.00px;-webkit-text-stroke:.1px #555;">瀑布图</div>
<div class="t " style="top:363.20px;font-size:8px;color:#555;letter-spacing:-0.5px;left:386.00px;-webkit-text-stroke:.1px #555;">漏斗图</div>
<div class="t " style="top:376.90px;font-size:8px;color:#555;letter-spacing:-0.5px;left:386.00px;-webkit-text-stroke:.1px #555;">组合图</div>
<div class="a" style="left:430.5px;top:127px;width:1px;height:294px;background:#e3e3e3;"></div>
<div class="a" style="left:437.7px;top:126.4px;width:34.2px;height:34px;background:#c6c6c6;"></div>
<div class="a" style="left:438.4px;top:164.2px;width:294px;height:1px;background:#d6d6d6;"></div>
<div class="t " style="top:170.90px;font-size:11px;color:#262626;letter-spacing:0px;left:438.40px;">簇状柱形图</div>
<div class="a" style="left:437.6px;top:186.1px;width:137.6px;height:84.5px;background:#fff;border:2px solid #c4c4c4"></div>
<div class="a" style="left:577.7px;top:188.4px;width:132.8px;height:80.2px;background:#fff;border:1px solid #e2e2e2"></div>
<svg style="left:0;top:0" width="771" height="458"><path d="M371.5 133.3 Q374 130.8 377.5 135.3" fill="none" stroke="#2e75b6" stroke-width="1.4"/><path d="M370 131.10000000000002 L370.3 135.0 L373.8 134.10000000000002Z" fill="#2e75b6"/><path d="M369.4 143.7 H373 L374 144.7 H378.5 V150.5 H369.4Z" fill="#e4bf76"/><path d="M369.8 156.70000000000002 V165.20000000000002 H378.5" fill="none" stroke="#6f6f6f" stroke-width=".7"/><rect x="371" y="162.20000000000002" width="1.8" height="3" fill="none" stroke="#6f6f6f" stroke-width=".6"/><rect x="373.3" y="158.70000000000002" width="1.8" height="6.5" fill="none" stroke="#6f6f6f" stroke-width=".6"/><rect x="375.6" y="160.70000000000002" width="1.8" height="4.5" fill="none" stroke="#6f6f6f" stroke-width=".6"/><path d="M369.8 170.4 V178.9 H378.5" fill="none" stroke="#6f6f6f" stroke-width=".7"/><path d="M370.5 176.4 L373 172.4 L375.5 175.4 L378 171.9" fill="none" stroke="#6f6f6f" stroke-width=".7"/><path d="M370.5 177.9 L373 175.4 L375.5 177.4 L378 174.9" fill="none" stroke="#6f6f6f" stroke-width=".6"/><circle cx="373.9" cy="188.60000000000002" r="4" fill="none" stroke="#6f6f6f" stroke-width=".8"/><path d="M373.9 188.60000000000002 V184.60000000000002 M373.9 188.60000000000002 L376.8 191.40000000000003" stroke="#6f6f6f" stroke-width=".8"/><path d="M369.8 197.8 V206.3" stroke="#6f6f6f" stroke-width=".8"/><rect x="370.2" y="198.8" width="6" height="1.4" fill="#6f6f6f"/><rect x="370.2" y="201.0" width="3.5" height="1.4" fill="#6f6f6f"/><rect x="370.2" y="203.20000000000002" width="7.5" height="1.4" fill="#6f6f6f"/><rect x="370.2" y="205.3" width="5" height="1.4" fill="#6f6f6f"/><path d="M369.8 211.5 V220.0 H378.5" fill="none" stroke="#6f6f6f" stroke-width=".7"/><path d="M370.2 213.0 L372.5 215.0 L374.5 212.5 L377.5 216.5 V219.6 H370.2Z M370.2 216.0 L373 218.0 L375.5 215.5 L377.5 218.0" fill="none" stroke="#6f6f6f" stroke-width=".7"/><path d="M369.8 225.2 V233.7 H378.5" fill="none" stroke="#6f6f6f" stroke-width=".7"/><circle cx="372" cy="231.2" r=".55" fill="#6f6f6f"/><circle cx="373.5" cy="229.2" r=".55" fill="#6f6f6f"/><circle cx="375" cy="230.7" r=".55" fill="#6f6f6f"/><circle cx="376.5" cy="227.7" r=".55" fill="#6f6f6f"/><circle cx="374.5" cy="227.2" r=".55" fill="#6f6f6f"/><circle cx="377.5" cy="229.7" r=".55" fill="#6f6f6f"/><circle cx="373.9" cy="242.6" r="3.6" fill="none" stroke="#6f6f6f" stroke-width=".8"/><path d="M370 244.9 A4.5 4.5 0 0 0 377.8 245.20000000000002 M373.9 246.4 V247.70000000000002 M371.5 247.70000000000002 H376.3" fill="none" stroke="#6f6f6f" stroke-width=".8"/><path d="M369.8 252.60000000000002 V261.1 H378.5" fill="none" stroke="#6f6f6f" stroke-width=".7"/><path d="M371.5 255.10000000000002 V260.1 M373.5 253.60000000000002 V260.1 M375.5 256.1 V260.1 M377.5 254.10000000000002 V260.1" stroke="#6f6f6f" stroke-width=".9"/><path d="M370 273.8 L371.5 267.8 Q374 265.8 378 267.3 L376.5 272.8 Q373 274.8 370 273.8Z" fill="none" stroke="#6f6f6f" stroke-width=".8"/><path d="M371 270.8 Q374 268.8 377 269.8 M372.5 272.8 L374.5 267.3" fill="none" stroke="#6f6f6f" stroke-width=".6"/><path d="M373.9 280.0 V285.5 M369.5 283.0 L373.9 284.8 L378.3 283.0 M371 288.8 L373.9 284.8 L376.8 288.8" fill="none" stroke="#6f6f6f" stroke-width=".8"/><rect x="369.8" y="294.2" width="8.5" height="8" fill="none" stroke="#6f6f6f" stroke-width=".8"/><path d="M373.5 294.2 V302.2 M373.5 297.2 H378.3 M376 297.2 V302.2" stroke="#6f6f6f" stroke-width=".7"/><circle cx="373.9" cy="311.9" r="4" fill="none" stroke="#6f6f6f" stroke-width=".8"/><circle cx="373.9" cy="311.9" r="1.8" fill="none" stroke="#6f6f6f" stroke-width=".7"/><path d="M371 309.09999999999997 L373 310.9 M375.5 312.9 L376.8 314.9" stroke="#6f6f6f" stroke-width=".7"/><path d="M369.8 321.1 V329.6 H378.5" fill="none" stroke="#6f6f6f" stroke-width=".7"/><rect x="370.5" y="324.6" width="1.8" height="5" fill="#6f6f6f"/><rect x="372.3" y="322.1" width="1.8" height="7.5" fill="#6f6f6f"/><rect x="374.1" y="323.6" width="1.8" height="6" fill="#6f6f6f"/><rect x="375.9" y="326.1" width="1.8" height="3.5" fill="#6f6f6f"/><path d="M369.8 334.8 V343.3 M372 335.3 V342.8 M375.5 336.3 V343.3 M371 338.3 H373 M374.5 340.3 H376.5" fill="none" stroke="#6f6f6f" stroke-width=".7"/><rect x="371.2" y="337.0" width="1.6" height="3" fill="none" stroke="#6f6f6f" stroke-width=".6"/><rect x="374.7" y="338.3" width="1.6" height="3" fill="none" stroke="#6f6f6f" stroke-width=".6"/><path d="M369.8 348.5 V357.0 H378.5" fill="none" stroke="#6f6f6f" stroke-width=".7"/><rect x="370.8" y="352.0" width="2" height="4.5" fill="#6f6f6f"/><rect x="373.3" y="352.0" width="2" height="2" fill="none" stroke="#6f6f6f" stroke-width=".6"/><rect x="375.8" y="349.5" width="2" height="7" fill="none" stroke="#6f6f6f" stroke-width=".6"/><path d="M369.6 362.7 H378.2 V364.7 H369.6Z M370.8 365.5 H377 V367.5 H370.8Z M372 368.3 H375.8 V370.5 H372Z" fill="none" stroke="#6f6f6f" stroke-width=".7"/><path d="M369.8 375.9 V384.4 H378.5" fill="none" stroke="#6f6f6f" stroke-width=".7"/><rect x="371" y="379.4" width="1.6" height="5" fill="#6f6f6f"/><rect x="373.5" y="380.9" width="1.6" height="3.5" fill="#6f6f6f"/><rect x="376" y="378.4" width="1.6" height="6" fill="#6f6f6f"/><path d="M370.5 378.4 L373.5 376.9 L376 376.4 L378 377.9" fill="none" stroke="#6f6f6f" stroke-width=".6"/></svg>
<svg style="left:0;top:0" width="771" height="458"><path d="M445.4 134 V152.5 H464.9" fill="none" stroke="#8a8a8a" stroke-width=".7"/><rect x="447.4" y="142.5" width="2.8" height="10.0" fill="#fff" stroke="#8a8a8a" stroke-width=".6"/><rect x="450.2" y="137.3" width="3.3" height="15.199999999999989" fill="#d9d9d9" stroke="#8a8a8a" stroke-width=".6"/><rect x="455.8" y="139" width="3.2" height="13.5" fill="#fff" stroke="#8a8a8a" stroke-width=".6"/><rect x="459" y="142.5" width="3.8" height="10.0" fill="#d9d9d9" stroke="#8a8a8a" stroke-width=".6"/><path d="M479.2 134 V152.5 H498.6" fill="none" stroke="#8a8a8a" stroke-width=".7"/><rect x="482.7" y="138" width="5.1" height="8.400000000000006" fill="#d9d9d9" stroke="#8a8a8a" stroke-width=".6"/><rect x="482.7" y="146.4" width="5.1" height="6.099999999999994" fill="#fff" stroke="#8a8a8a" stroke-width=".6"/><rect x="490.8" y="135.1" width="5.6" height="8.300000000000011" fill="#d9d9d9" stroke="#8a8a8a" stroke-width=".6"/><rect x="490.8" y="143.4" width="5.6" height="9.099999999999994" fill="#fff" stroke="#8a8a8a" stroke-width=".6"/><path d="M513.5 134 V152.5 H532.5" fill="none" stroke="#8a8a8a" stroke-width=".7"/><rect x="516.8" y="135.1" width="5.2" height="11.300000000000011" fill="#d9d9d9" stroke="#8a8a8a" stroke-width=".6"/><rect x="516.8" y="146.4" width="5.2" height="6.099999999999994" fill="#fff" stroke="#8a8a8a" stroke-width=".6"/><rect x="525.2" y="135.1" width="5.4" height="8.300000000000011" fill="#d9d9d9" stroke="#8a8a8a" stroke-width=".6"/><rect x="525.2" y="143.4" width="5.4" height="9.099999999999994" fill="#fff" stroke="#8a8a8a" stroke-width=".6"/><path d="M550.2 133.5 V148 L548.2 150.5" fill="none" stroke="#8a8a8a" stroke-width=".6"/><path d="M583.7 133.5 V148 L581.7 150.5" fill="none" stroke="#8a8a8a" stroke-width=".6"/><path d="M618.2 133.5 V148 L616.2 150.5" fill="none" stroke="#8a8a8a" stroke-width=".6"/><path d="M651.8 133.5 V148 L649.8 150.5" fill="none" stroke="#8a8a8a" stroke-width=".6"/><path d="M551.5 138.3 H555.3 V152.5 H551.5Z" fill="#d6d6d6" stroke="#777" stroke-width=".6"/><path d="M551.5 138.3 L552.8 137 H556.5999999999999 L555.3 138.3Z M555.3 138.3 L556.5999999999999 137 V151.2 L555.3 152.5Z" fill="#b8b8b8" stroke="#777" stroke-width=".6"/><path d="M554.5 139.8 H558.0 V152.5 H554.5Z" fill="#fff" stroke="#777" stroke-width=".6"/><path d="M554.5 139.8 L555.8 138.5 H559.3 L558.0 139.8Z M558.0 139.8 L559.3 138.5 V151.2 L558.0 152.5Z" fill="#cfcfcf" stroke="#777" stroke-width=".6"/><path d="M559.5 140.8 H563.8 V152.5 H559.5Z" fill="#d6d6d6" stroke="#777" stroke-width=".6"/><path d="M559.5 140.8 L560.8 139.5 H565.0999999999999 L563.8 140.8Z M563.8 140.8 L565.0999999999999 139.5 V151.2 L563.8 152.5Z" fill="#b8b8b8" stroke="#777" stroke-width=".6"/><path d="M585 140.3 H589.5 V152.5 H585Z" fill="#cfcfcf" stroke="#777" stroke-width=".6"/><path d="M585 140.3 L586.3 139 H590.8 L589.5 140.3Z M589.5 140.3 L590.8 139 V151.2 L589.5 152.5Z" fill="#b8b8b8" stroke="#777" stroke-width=".6"/><path d="M585 147.3 H589.5 V152.5 H585Z" fill="#fff" stroke="#777" stroke-width=".6"/><path d="M585 147.3 L586.3 146 H590.8 L589.5 147.3Z M589.5 147.3 L590.8 146 V151.2 L589.5 152.5Z" fill="#cfcfcf" stroke="#777" stroke-width=".6"/><path d="M591.5 135.8 H596.3 V152.5 H591.5Z" fill="#cfcfcf" stroke="#777" stroke-width=".6"/><path d="M591.5 135.8 L592.8 134.5 H597.5999999999999 L596.3 135.8Z M596.3 135.8 L597.5999999999999 134.5 V151.2 L596.3 152.5Z" fill="#b8b8b8" stroke="#777" stroke-width=".6"/><path d="M591.5 145.3 H596.3 V152.5 H591.5Z" fill="#fff" stroke="#777" stroke-width=".6"/><path d="M591.5 145.3 L592.8 144 H597.5999999999999 L596.3 145.3Z M596.3 145.3 L597.5999999999999 144 V151.2 L596.3 152.5Z" fill="#cfcfcf" stroke="#777" stroke-width=".6"/><path d="M619.5 135.8 H624.3 V152.5 H619.5Z" fill="#cfcfcf" stroke="#777" stroke-width=".6"/><path d="M619.5 135.8 L620.8 134.5 H625.5999999999999 L624.3 135.8Z M624.3 135.8 L625.5999999999999 134.5 V151.2 L624.3 152.5Z" fill="#b8b8b8" stroke="#777" stroke-width=".6"/><path d="M619.5 147.8 H624.3 V152.5 H619.5Z" fill="#fff" stroke="#777" stroke-width=".6"/><path d="M619.5 147.8 L620.8 146.5 H625.5999999999999 L624.3 147.8Z M624.3 147.8 L625.5999999999999 146.5 V151.2 L624.3 152.5Z" fill="#cfcfcf" stroke="#777" stroke-width=".6"/><path d="M627 135.8 H631.8 V152.5 H627Z" fill="#cfcfcf" stroke="#777" stroke-width=".6"/><path d="M627 135.8 L628.3 134.5 H633.0999999999999 L631.8 135.8Z M631.8 135.8 L633.0999999999999 134.5 V151.2 L631.8 152.5Z" fill="#b8b8b8" stroke="#777" stroke-width=".6"/><path d="M627 144.8 H631.8 V152.5 H627Z" fill="#fff" stroke="#777" stroke-width=".6"/><path d="M627 144.8 L628.3 143.5 H633.0999999999999 L631.8 144.8Z M631.8 144.8 L633.0999999999999 143.5 V151.2 L631.8 152.5Z" fill="#cfcfcf" stroke="#777" stroke-width=".6"/><path d="M652.5 144.3 H656.3 V152.5 H652.5Z" fill="#f4f4f4" stroke="#777" stroke-width=".6"/><path d="M652.5 144.3 L653.8 143 H657.5999999999999 L656.3 144.3Z M656.3 144.3 L657.5999999999999 143 V151.2 L656.3 152.5Z" fill="#dcdcdc" stroke="#777" stroke-width=".6"/><path d="M655.5 135.8 H659.0 V149 H655.5Z" fill="#cfcfcf" stroke="#777" stroke-width=".6"/><path d="M655.5 135.8 L656.8 134.5 H660.3 L659.0 135.8Z M659.0 135.8 L660.3 134.5 V147.7 L659.0 149Z" fill="#b8b8b8" stroke="#777" stroke-width=".6"/><path d="M661 140.3 H665 V152.5 H661Z" fill="#f4f4f4" stroke="#777" stroke-width=".6"/><path d="M661 140.3 L662.3 139 H666.3 L665 140.3Z M665 140.3 L666.3 139 V151.2 L665 152.5Z" fill="#dcdcdc" stroke="#777" stroke-width=".6"/><path d="M664 135.3 H667.8 V149 H664Z" fill="#cfcfcf" stroke="#777" stroke-width=".6"/><path d="M664 135.3 L665.3 134 H669.0999999999999 L667.8 135.3Z M667.8 135.3 L669.0999999999999 134 V147.7 L667.8 149Z" fill="#b8b8b8" stroke="#777" stroke-width=".6"/></svg>
<svg style="left:0;top:0" width="771" height="458"><line x1="452.5" x2="568.6" y1="241.40" y2="241.40" stroke="#e4e4e4" stroke-width=".6"/><line x1="452.5" x2="568.6" y1="236.53" y2="236.53" stroke="#e4e4e4" stroke-width=".6"/><line x1="452.5" x2="568.6" y1="231.65" y2="231.65" stroke="#e4e4e4" stroke-width=".6"/><line x1="452.5" x2="568.6" y1="226.78" y2="226.78" stroke="#e4e4e4" stroke-width=".6"/><line x1="452.5" x2="568.6" y1="221.90" y2="221.90" stroke="#e4e4e4" stroke-width=".6"/><line x1="452.5" x2="568.6" y1="217.03" y2="217.03" stroke="#e4e4e4" stroke-width=".6"/><line x1="452.5" x2="568.6" y1="212.15" y2="212.15" stroke="#e4e4e4" stroke-width=".6"/><line x1="452.5" x2="568.6" y1="207.28" y2="207.28" stroke="#e4e4e4" stroke-width=".6"/><line x1="452.5" x2="568.6" y1="202.40" y2="202.40" stroke="#e4e4e4" stroke-width=".6"/><rect x="459.1" y="231.65" width="6" height="9.75" fill="#5b9bd5"/><rect x="478.45000000000005" y="225.41" width="6" height="15.99" fill="#5b9bd5"/><rect x="497.8" y="219.46" width="6" height="21.94" fill="#5b9bd5"/><rect x="517.15" y="216.15" width="6" height="25.25" fill="#5b9bd5"/><rect x="536.5" y="212.15" width="6" height="29.25" fill="#5b9bd5"/><rect x="555.85" y="205.08" width="6" height="36.32" fill="#5b9bd5"/><line x1="588.7" x2="706.3" y1="251.00" y2="251.00" stroke="#e4e4e4" stroke-width=".6"/><line x1="588.7" x2="706.3" y1="244.94" y2="244.94" stroke="#e4e4e4" stroke-width=".6"/><line x1="588.7" x2="706.3" y1="238.88" y2="238.88" stroke="#e4e4e4" stroke-width=".6"/><line x1="588.7" x2="706.3" y1="232.81" y2="232.81" stroke="#e4e4e4" stroke-width=".6"/><line x1="588.7" x2="706.3" y1="226.75" y2="226.75" stroke="#e4e4e4" stroke-width=".6"/><line x1="588.7" x2="706.3" y1="220.69" y2="220.69" stroke="#e4e4e4" stroke-width=".6"/><line x1="588.7" x2="706.3" y1="214.62" y2="214.62" stroke="#e4e4e4" stroke-width=".6"/><line x1="588.7" x2="706.3" y1="208.56" y2="208.56" stroke="#e4e4e4" stroke-width=".6"/><line x1="588.7" x2="706.3" y1="202.50" y2="202.50" stroke="#e4e4e4" stroke-width=".6"/><rect x="602.00" y="238.88" width="12.2" height="12.12" fill="#5b9bd5"/><rect x="617.75" y="231.12" width="12.2" height="19.88" fill="#ed7d31"/><rect x="633.50" y="223.72" width="12.2" height="27.28" fill="#a5a5a5"/><rect x="649.25" y="219.60" width="12.2" height="31.40" fill="#ffc000"/><rect x="665.00" y="214.62" width="12.2" height="36.38" fill="#4472c4"/><rect x="680.75" y="205.83" width="12.2" height="45.17" fill="#70ad47"/></svg>
<div class="t " style="top:192.80px;font-size:5px;color:#777;letter-spacing:0px;-webkit-text-stroke:0;left:446.40px;width:120px;text-align:center;">销售额</div>
<div class="t " style="top:193.00px;font-size:5px;color:#777;letter-spacing:0px;-webkit-text-stroke:0;left:584.30px;width:120px;text-align:center;">图表标题</div>
<div class="t " style="top:239.83px;font-size:3.5px;color:#666;letter-spacing:0px;-webkit-text-stroke:0;right:321.70px;text-align:right;">0</div>
<div class="t " style="top:234.95px;font-size:3.5px;color:#666;letter-spacing:0px;-webkit-text-stroke:0;right:321.70px;text-align:right;">100</div>
<div class="t " style="top:230.08px;font-size:3.5px;color:#666;letter-spacing:0px;-webkit-text-stroke:0;right:321.70px;text-align:right;">200</div>
<div class="t " style="top:225.20px;font-size:3.5px;color:#666;letter-spacing:0px;-webkit-text-stroke:0;right:321.70px;text-align:right;">300</div>
<div class="t " style="top:220.33px;font-size:3.5px;color:#666;letter-spacing:0px;-webkit-text-stroke:0;right:321.70px;text-align:right;">400</div>
<div class="t " style="top:215.45px;font-size:3.5px;color:#666;letter-spacing:0px;-webkit-text-stroke:0;right:321.70px;text-align:right;">500</div>
<div class="t " style="top:210.58px;font-size:3.5px;color:#666;letter-spacing:0px;-webkit-text-stroke:0;right:321.70px;text-align:right;">600</div>
<div class="t " style="top:205.70px;font-size:3.5px;color:#666;letter-spacing:0px;-webkit-text-stroke:0;right:321.70px;text-align:right;">700</div>
<div class="t " style="top:200.83px;font-size:3.5px;color:#666;letter-spacing:0px;-webkit-text-stroke:0;right:321.70px;text-align:right;">800</div>
<div class="t " style="top:249.43px;font-size:3.5px;color:#666;letter-spacing:0px;-webkit-text-stroke:0;right:185.60px;text-align:right;">0</div>
<div class="t " style="top:243.36px;font-size:3.5px;color:#666;letter-spacing:0px;-webkit-text-stroke:0;right:185.60px;text-align:right;">100</div>
<div class="t " style="top:237.30px;font-size:3.5px;color:#666;letter-spacing:0px;-webkit-text-stroke:0;right:185.60px;text-align:right;">200</div>
<div class="t " style="top:231.24px;font-size:3.5px;color:#666;letter-spacing:0px;-webkit-text-stroke:0;right:185.60px;text-align:right;">300</div>
<div class="t " style="top:225.18px;font-size:3.5px;color:#666;letter-spacing:0px;-webkit-text-stroke:0;right:185.60px;text-align:right;">400</div>
<div class="t " style="top:219.11px;font-size:3.5px;color:#666;letter-spacing:0px;-webkit-text-stroke:0;right:185.60px;text-align:right;">500</div>
<div class="t " style="top:213.05px;font-size:3.5px;color:#666;letter-spacing:0px;-webkit-text-stroke:0;right:185.60px;text-align:right;">600</div>
<div class="t " style="top:206.99px;font-size:3.5px;color:#666;letter-spacing:0px;-webkit-text-stroke:0;right:185.60px;text-align:right;">700</div>
<div class="t " style="top:200.93px;font-size:3.5px;color:#666;letter-spacing:0px;-webkit-text-stroke:0;right:185.60px;text-align:right;">800</div>
<div class="t " style="top:253.20px;font-size:4px;color:#777;letter-spacing:0px;-webkit-text-stroke:0;left:587.50px;width:120px;text-align:center;">销售额</div>
<div class="t" style="left:462.40000000000003px;top:244.3px;font-size:4px;color:#555;-webkit-text-stroke:.05px #888;transform-origin:0 0;transform:rotate(-45deg) scale(.85) translateX(-100%)">单人站综合训练器</div>
<div class="t" style="left:481.75000000000006px;top:244.3px;font-size:4px;color:#555;-webkit-text-stroke:.05px #888;transform-origin:0 0;transform:rotate(-45deg) scale(.85) translateX(-100%)">安全举重机</div>
<div class="t" style="left:501.1px;top:244.3px;font-size:4px;color:#555;-webkit-text-stroke:.05px #888;transform-origin:0 0;transform:rotate(-45deg) scale(.85) translateX(-100%)">跑步机</div>
<div class="t" style="left:520.4499999999999px;top:244.3px;font-size:4px;color:#555;-webkit-text-stroke:.05px #888;transform-origin:0 0;transform:rotate(-45deg) scale(.85) translateX(-100%)">椭圆机</div>
<div class="t" style="left:539.8px;top:244.3px;font-size:4px;color:#555;-webkit-text-stroke:.05px #888;transform-origin:0 0;transform:rotate(-45deg) scale(.85) translateX(-100%)">动感单车</div>
<div class="t" style="left:559.15px;top:244.3px;font-size:4px;color:#555;-webkit-text-stroke:.05px #888;transform-origin:0 0;transform:rotate(-45deg) scale(.85) translateX(-100%)">倒蹬机</div>
<div class="a" style="left:586.8000000000001px;top:261.8px;width:1.6px;height:1.6px;background:#5b9bd5"></div>
<div class="t" style="left:589.6px;top:260.6px;font-size:4px;color:#555;-webkit-text-stroke:.1px #777;transform-origin:0 0;transform:scale(.8)">单人站综合训练器</div>
<div class="a" style="left:618.8000000000001px;top:261.8px;width:1.6px;height:1.6px;background:#ed7d31"></div>
<div class="t" style="left:621.6px;top:260.6px;font-size:4px;color:#555;-webkit-text-stroke:.1px #777;transform-origin:0 0;transform:scale(.8)">安全举重机</div>
<div class="a" style="left:640.7px;top:261.8px;width:1.6px;height:1.6px;background:#a5a5a5"></div>
<div class="t" style="left:643.5px;top:260.6px;font-size:4px;color:#555;-webkit-text-stroke:.1px #777;transform-origin:0 0;transform:scale(.8)">跑步机</div>
<div class="a" style="left:655.9000000000001px;top:261.8px;width:1.6px;height:1.6px;background:#ffc000"></div>
<div class="t" style="left:658.7px;top:260.6px;font-size:4px;color:#555;-webkit-text-stroke:.1px #777;transform-origin:0 0;transform:scale(.8)">椭圆机</div>
<div class="a" style="left:671.1px;top:261.8px;width:1.6px;height:1.6px;background:#4472c4"></div>
<div class="t" style="left:673.9px;top:260.6px;font-size:4px;color:#555;-webkit-text-stroke:.1px #777;transform-origin:0 0;transform:scale(.8)">动感单车</div>
<div class="a" style="left:689.7px;top:261.8px;width:1.6px;height:1.6px;background:#70ad47"></div>
<div class="t" style="left:692.5px;top:260.6px;font-size:4px;color:#555;-webkit-text-stroke:.1px #777;transform-origin:0 0;transform:scale(.8)">倒蹬机</div>
<div class="a" style="left:741.5px;top:449.5px;width:1px;height:1px;background:#a0a0a0;"></div>
<div class="a" style="left:739.5px;top:449.5px;width:1px;height:1px;background:#a0a0a0;"></div>
<div class="a" style="left:741.5px;top:447.5px;width:1px;height:1px;background:#a0a0a0;"></div>
<div class="a" style="left:737.5px;top:449.5px;width:1px;height:1px;background:#a0a0a0;"></div>
<div class="a" style="left:739.5px;top:447.5px;width:1px;height:1px;background:#a0a0a0;"></div>
<div class="a" style="left:741.5px;top:445.5px;width:1px;height:1px;background:#a0a0a0;"></div>
<div class="a" style="left:649.7px;top:432px;width:41.6px;height:14.5px;background:#e1e1e1;border:1px solid #0078d7"></div>
<div class="a" style="left:698.1px;top:432px;width:41.8px;height:14.5px;background:#e1e1e1;border:1px solid #adadad"></div>
<div class="t " style="top:436.00px;font-size:8px;color:#333;letter-spacing:-0.5px;left:610.50px;width:120px;text-align:center;">确定</div>
<div class="t " style="top:436.00px;font-size:8px;color:#333;letter-spacing:-0.5px;left:659.00px;width:120px;text-align:center;">取消</div>
<svg style="left:0;top:0" width="771" height="458"><polygon points="168.64,347.79 88.10,28.37 90.56,30.32 84.20,23.70 81.85,32.57 83.06,29.68 167.76,348.01" fill="#ff1a1a"/><polygon points="213.72,379.56 328.42,79.40 329.61,82.51 327.90,72.80 320.24,79.01 323.18,77.44 212.88,379.24" fill="#ff1a1a"/><polygon points="322.22,88.91 413.64,153.13 409.77,154.37 418.90,154.30 415.64,145.78 415.90,149.83 322.78,88.09" fill="#ff1a1a"/><polygon points="492.99,362.88 514.29,243.74 515.95,246.04 512.60,237.90 506.87,244.57 509.16,242.92 492.01,362.72" fill="#ff1a1a"/><polygon points="680.91,402.79 685.02,426.62 681.44,424.87 687.90,431.60 690.80,422.73 688.33,425.86 681.69,402.61" fill="#ff1a1a"/></svg>
</body></html>
